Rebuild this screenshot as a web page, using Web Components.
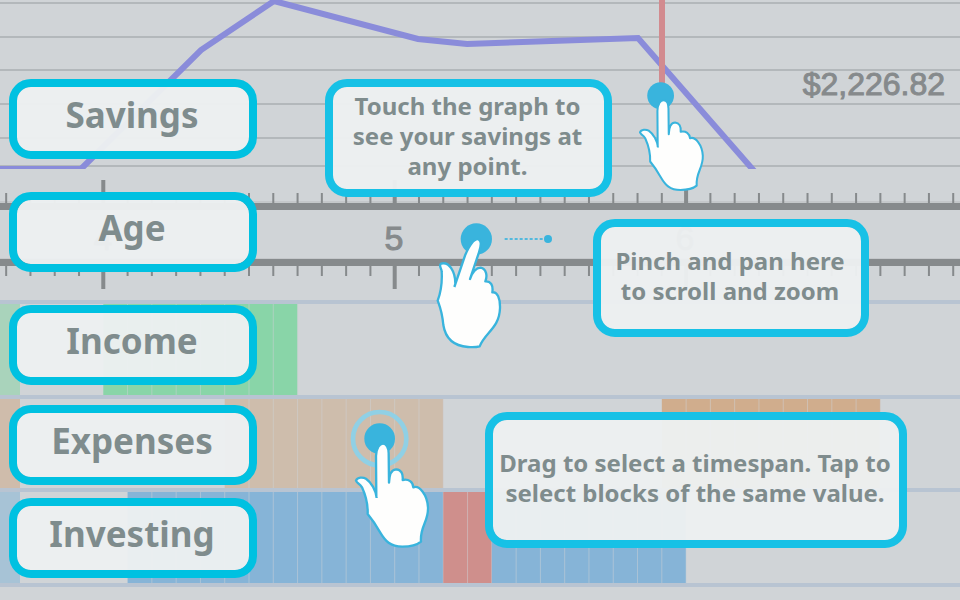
<!DOCTYPE html>
<html lang="en">
<head>
<meta charset="utf-8">
<title>Savings timeline guide</title>
<style>
  body { margin: 0; background: #d0d4d7; font-family: "Noto Sans", "Open Sans", sans-serif; color: #7f8c8d; }
</style>
</head>
<body>
<savings-guide></savings-guide>
<script>
  const MONTH = 291.4 / 12;
  const ORIGIN = 103.3;
  const monthX = m => ORIGIN + m * MONTH;

  function attach(el, html) {
    const t = document.createElement('template');
    t.innerHTML = html;
    el.attachShadow({ mode: 'open' }).append(t.content.cloneNode(true));
  }

  // Rounded category caption at the left of a row.
  customElements.define('row-label', class extends HTMLElement {
    constructor() {
      super();
      attach(this, `<style>
        :host { display: block; box-sizing: border-box; width: 248px; margin-left: 9px; padding: 4px 2px 12px 0;
          border: 8px solid #00c1e1; border-radius: 22px; background: rgba(236,240,241,.97);
          background-clip: padding-box; text-align: center; }
        h2 { margin: 0; font-size: 35px; line-height: 48px; font-weight: 700; }
      </style><h2><slot></slot></h2>`);
    }
  });

  // Floating hint box.
  customElements.define('hint-box', class extends HTMLElement {
    constructor() {
      super();
      attach(this, `<style>
        :host { display: flex; align-items: center; justify-content: center; box-sizing: border-box;
          padding: 0 2px 4px 0; border: 8px solid #17c1e6; border-radius: 22px;
          background: rgba(236,240,241,.97); background-clip: padding-box; }
        p { margin: 0; font-size: 24px; line-height: 30px; font-weight: 700; text-align: center; white-space: nowrap; }
      </style><p><slot></slot></p>`);
    }
  });

  // Pointing hand; kind is "tap", "touch" or "pan".
  customElements.define('touch-hand', class extends HTMLElement {
    connectedCallback() {
      if (this.shadowRoot) return;
      const kind = this.getAttribute('kind');
      const upright = `<circle cx="119" cy="116" r="46" fill="#39b4dd"/>
        <path d="M109 292 L108 168 C109 143 119 131 129 131 C139 131 146 143 146 160 L147 248 C148 220 157 208 169 208 C183 209 190 221 188 240 C206 236 219 246 220 262 C238 255 262 284 264 322 C266 365 239 380 243 425 C230 436 211 440 187 440 C151 440 136 424 119 395 C105 370 93 354 83 342 C84 318 76 284 66 262 C58 248 52 252 48 242 C52 231 69 231 78 236 C94 247 108 271 110 294"
          fill="#fefefd" stroke="#39b4dd" stroke-width="7" stroke-linejoin="round"/>`;
      const art = {
        touch: upright,
        tap: `<circle cx="119" cy="116" r="80" fill="none" stroke="#90d0e5" stroke-width="14"/>` + upright,
        pan: `<circle cx="139" cy="72" r="47" fill="#39b4dd"/>
          <path d="M224 72H342" stroke="#53b9dd" stroke-width="6" stroke-dasharray="9 6"/>
          <circle cx="354" cy="72" r="12" fill="#39b4dd"/>
          <path d="M73 216 L106 119 C121 86 135 70 146 73 C156 78 153 94 147 112 L120 192 C129 167 140 158 152 158 C169 162 173 182 166 199 C183 198 190 212 187 232 C202 230 211 250 210 280 C208 340 165 352 149 394 C138 397 126 397 114 396 C63 392 45 362 40 330 C36 288 30 276 23 257 C35 225 37 203 35 170 C35 159 25 153 33 146 C57 138 76 170 76 206"
            fill="#fefefd" stroke="#39b4dd" stroke-width="7" stroke-linejoin="round"/>`
      }[kind];
      const box = kind === 'pan' ? '0 0 390 420' : '0 0 330 465';
      attach(this, `<style>:host { display: block; } svg { display: block; width: 100%; }</style>
        <svg viewBox="${box}" aria-hidden="true">${art}</svg>`);
    }
  });

  // Savings line graph with its gridlines and cursor.
  customElements.define('savings-graph', class extends HTMLElement {
    constructor() {
      super();
      const grid = [3, 37, 70, 104, 138, 166].map(y =>
        `<path d="M0 ${y}H960" stroke="#b3b8bb" stroke-width="2"/>`).join('');
      attach(this, `<style>
        :host { display: grid; height: 180px; align-items: start; }
        svg, .front { grid-area: 1 / 1; }
        svg { width: 100%; height: 169px; display: block; }
        path { vector-effect: non-scaling-stroke; fill: none; }
        .front { display: flex; justify-content: space-between; align-items: flex-start; padding: 66px 15px 0 0; position: relative; }
        ::slotted(row-label) { margin-top: 13px; }
        output { font: 32px/36px "Liberation Sans", Arial, sans-serif; color: #868a8c; -webkit-text-stroke: 1px #868a8c; }
      </style>
      <svg viewBox="0 0 960 169" preserveAspectRatio="none" aria-hidden="true">${grid}
        <path d="M0 169H81L201 50L274 1L418 39L467 44L638 38L755 172" stroke="#8a8cda" stroke-width="6"/>
        <path d="M662 0V96" stroke="#d28b8f" stroke-width="6"/>
      </svg>
      <div class="front"><slot></slot><output>$2,226.82</output></div>`);
    }
  });

  // Age ruler: two bars with monthly ticks and yearly numbers.
  customElements.define('age-ruler', class extends HTMLElement {
    constructor() {
      super();
      let ticks = '';
      for (let m = -4; m < 36; m++) {
        const year = m % 12 === 0, w = year ? 4 : 2, x = monthX(m);
        ticks += `<path d="M${x} ${year ? 0 : 13}V23M${x} 86V${year ? 109 : 96}" stroke-width="${w}"/>`;
      }
      attach(this, `<style>
        :host { display: grid; grid-template-columns: 100%; height: 120px; align-items: start; }
        svg, .years, .front { grid-area: 1 / 1; }
        svg { width: 100%; height: 120px; display: block; }
        path { vector-effect: non-scaling-stroke; stroke: #868a8c; }
        .years { display: grid; grid-template-columns: 206fr 85fr 206fr 85fr 206fr 172fr; text-align: center; padding-top: 39px;
          font: 34px/38px "Liberation Sans", Arial, sans-serif; color: #868a8c; -webkit-text-stroke: 1px #868a8c; }
        .years span:nth-child(1) { grid-column: 1; }
        .years span:nth-child(2) { grid-column: 3; }
        .years span:nth-child(3) { grid-column: 5; }
        .front { padding-top: 12px; position: relative; }
      </style>
      <svg viewBox="0 0 960 120" preserveAspectRatio="none" aria-hidden="true">
        <path d="M0 22H960M0 79H960" stroke-width="1" style="stroke:#b8bbbd"/>
        <rect y="23" width="960" height="7" fill="#868a8c"/>
        <rect y="79" width="960" height="7" fill="#868a8c"/>${ticks}
      </svg>
      <div class="years"><span>4</span><span>5</span><span>6</span></div>
      <div class="front"><slot></slot></div>`);
    }
  });

  // One cash-flow row; blocks="start,end,colour;…" in months from the first year mark.
  customElements.define('flow-track', class extends HTMLElement {
    connectedCallback() {
      if (this.shadowRoot) return;
      let art = `<rect width="20" height="100" fill="${this.getAttribute('edge')}"/>`;
      for (const b of this.getAttribute('blocks').split(';')) {
        const [s, e, c] = b.split(',');
        art += `<rect x="${monthX(+s)}" width="${(e - s) * MONTH}" height="100" fill="${c}"/>`;
        for (let m = +s + 1; m <= +e; m++)
          art += `<path d="M${monthX(m)} 0V100" stroke="#d0d4d7" stroke-opacity=".5" stroke-width="1"/>`;
      }
      attach(this, `<style>
        :host { display: grid; box-sizing: border-box; border-top: 4px solid #b8c4d2; height: var(--row, 94px); }
        svg, .front { grid-area: 1 / 1; }
        svg { width: 100%; height: 100%; display: block; min-height: 0; }
        path { vector-effect: non-scaling-stroke; }
        .front { position: relative; padding-top: var(--inset, 6px); }
      </style>
      <svg viewBox="0 0 960 100" preserveAspectRatio="none" aria-hidden="true">${art}</svg>
      <div class="front"><slot></slot></div>`);
    }
  });

  customElements.define('savings-guide', class extends HTMLElement {
    constructor() {
      super();
      attach(this, `<style>
        :host { display: block; position: relative; min-height: 100vh; overflow: hidden; --u: calc(100% / 960); }
        .income { --row: 95px; --inset: 1px; }
        .expenses { --row: 93px; --inset: 6px; }
        .investing { --row: 95px; --inset: 6px; }
        footer { border-top: 4px solid #b8c4d2; }
        hint-box, touch-hand { position: absolute; }
        .h1 { left: calc(var(--u) * 325); top: 79px; width: 287px; min-height: 118px; }
        .h2 { left: calc(var(--u) * 593); top: 219px; width: 276px; min-height: 118px; }
        .h3 { left: calc(var(--u) * 485); top: 412px; width: 422px; min-height: 136px; }
        .t1 { left: calc(var(--u) * 626); top: 62px; width: 96px; }
        .t2 { left: calc(var(--u) * 430); top: 215px; width: 130px; }
        .t3 { left: calc(var(--u) * 340); top: 400px; width: 110px; }
      </style>
      <main>
        <savings-graph><row-label>Savings</row-label></savings-graph>
        <age-ruler><row-label>Age</row-label></age-ruler>
        <flow-track class="income" edge="#a9d3bb" blocks="0,8,#89d5a8"><row-label>Income</row-label></flow-track>
        <flow-track class="expenses" edge="#cfbcab" blocks="5,14,#cebdac;23,32,#d0ad8d"><row-label>Expenses</row-label></flow-track>
        <flow-track class="investing" edge="#a7c3d6" blocks="1,14,#86b4d7;14,16,#cf8f8c;16,24,#86b4d7"><row-label>Investing</row-label></flow-track>
        <footer></footer>
      </main>
      <hint-box class="h1">Touch the graph to<br>see your savings at<br>any point.</hint-box>
      <hint-box class="h2">Pinch and pan here<br>to scroll and zoom</hint-box>
      <hint-box class="h3">Drag to select a timespan. Tap to<br>select blocks of the same value.</hint-box>
      <touch-hand class="t1" kind="touch"></touch-hand>
      <touch-hand class="t2" kind="pan"></touch-hand>
      <touch-hand class="t3" kind="tap"></touch-hand>`);
    }
  });
</script>
</body>
</html>
